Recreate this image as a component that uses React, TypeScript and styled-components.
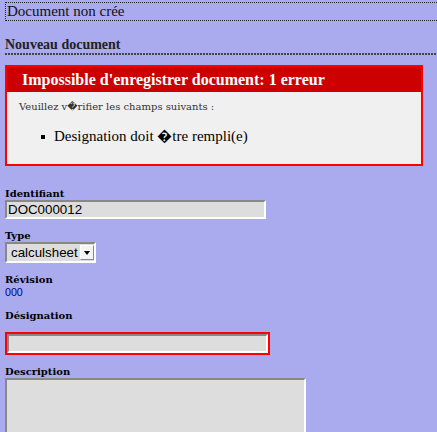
import React from 'react';
import styled, { createGlobalStyle } from 'styled-components';

const GlobalStyle = createGlobalStyle`
  html, body {
    margin: 0;
    padding: 0;
    background: #aaaaee;
    overflow: hidden;
  }
  body {
    font-family: 'Liberation Serif', 'Times New Roman', serif;
    color: #000;
  }
`;

const Page = styled.div`
  padding: 2px 0 0 5px;
  min-height: 432px;
  box-sizing: border-box;
`;

const Title = styled.h1`
  margin: 0 -10px 0 0;
  border: 1px dotted #222;
  padding: 0 1px;
  font: normal 15px/17px 'Liberation Serif', 'Times New Roman', serif;
  color: #111;
`;

const SectionHeading = styled.h2`
  margin: 15px 0 0;
  padding: 0 0 2px;
  font: bold 14px/17px 'Liberation Serif', 'Times New Roman', serif;
  color: #222;
  background: linear-gradient(to right, #444 2px, transparent 2px) left bottom / 3px 2px repeat-x;
`;

const ErrorBox = styled.div`
  width: 418px;
  box-sizing: border-box;
  margin-top: 10px;
  border: 2px solid #ff0000;
  background: #f0f0f0;
`;

const ErrorHeader = styled.h2`
  margin: 0;
  padding: 0 0 0 15px;
  height: 25px;
  font: bold 16px/25px 'Liberation Serif', 'Times New Roman', serif;
  color: #fff;
  background: #cc0000;
`;

const ErrorBody = styled.div`
  padding: 0 7px 19px;
`;

const ErrorIntro = styled.p`
  margin: 0;
  padding: 9px 5px 0;
  font: normal 10px/12px 'DejaVu Serif', serif;
  color: #333;
`;

const ErrorList = styled.ul`
  margin: 14px 0 0;
  padding: 0 0 0 27px;
  list-style: none;
`;

const ErrorItem = styled.li`
  display: flex;
  align-items: center;
  font: normal 15px/18px 'Liberation Serif', 'Times New Roman', serif;
  color: #000;
  &::before {
    content: '';
    flex: none;
    width: 4px;
    height: 4px;
    margin: 1px 9px 0 0;
    background: #000;
  }
`;

const Form = styled.div`
  display: flex;
  flex-direction: column;
  align-items: flex-start;
  padding-top: 11px;
`;

const Field = styled.div`
  display: flex;
  flex-direction: column;
  align-items: flex-start;
  margin-top: 10px;
`;

const Label = styled.label`
  font: bold 10px/13px 'DejaVu Serif', serif;
  color: #000;
`;

const Value = styled.div`
  font: normal 10.667px/13px 'Liberation Sans', Arial, sans-serif;
  color: #000080;
`;

const insetBorder = `
  border: 2px solid;
  border-color: #888888 #ffffff #ffffff #888888;
`;

const TextInput = styled.input`
  ${insetBorder}
  width: 261px;
  height: 19px;
  box-sizing: border-box;
  margin: 0;
  padding: 0 1px;
  background: #dddddd;
  font: normal 13.333px/15px 'Liberation Sans', Arial, sans-serif;
  color: #000;
  outline: none;
`;

const ErrorWrap = styled.div`
  display: flex;
  margin-top: 10px;
  padding: 2px;
  background: #ff0000;
`;

const SelectBox = styled.div`
  ${insetBorder}
  display: flex;
  align-items: center;
  width: 91px;
  height: 21px;
  box-sizing: border-box;
  padding-left: 4px;
  background: #dddddd;
  font: normal 13.333px/15px 'Liberation Sans', Arial, sans-serif;
  color: #000;
`;

const SelectText = styled.span`
  flex: 1;
  white-space: nowrap;
`;

const SelectArrow = styled.span`
  display: flex;
  align-items: center;
  justify-content: center;
  width: 14px;
  height: 15px;
  box-sizing: border-box;
  border: 1px solid;
  border-color: #ffffff #888888 #888888 #ffffff;
  background: #f4f4f4;
`;

const TextArea = styled.textarea`
  ${insetBorder}
  display: block;
  width: 301px;
  height: 80px;
  box-sizing: border-box;
  margin: 0;
  padding: 1px;
  background: #dddddd;
  font: normal 13.333px/15px 'Liberation Sans', Arial, sans-serif;
  resize: none;
  outline: none;
`;

export default function App() {
  return (
    <>
      <GlobalStyle />
      <Page>
        <Title>Document non crée</Title>
        <SectionHeading>Nouveau document</SectionHeading>
        <ErrorBox>
          <ErrorHeader>Impossible d'enregistrer document: 1 erreur</ErrorHeader>
          <ErrorBody>
            <ErrorIntro>Veuillez v{'\uFFFD'}rifier les champs suivants :</ErrorIntro>
            <ErrorList>
              <ErrorItem>Designation doit {'\uFFFD'}tre rempli(e)</ErrorItem>
            </ErrorList>
          </ErrorBody>
        </ErrorBox>
        <Form>
          <Field>
            <Label>Identifiant</Label>
            <TextInput type="text" defaultValue="DOC000012" />
          </Field>
          <Field>
            <Label>Type</Label>
            <SelectBox>
              <SelectText>calculsheet</SelectText>
              <SelectArrow>
                <svg width="6" height="4" viewBox="0 0 6 4">
                  <path d="M0 0H6L3 4Z" fill="#000" />
                </svg>
              </SelectArrow>
            </SelectBox>
          </Field>
          <Field>
            <Label>Révision</Label>
            <Value>000</Value>
          </Field>
          <Field>
            <Label>Désignation</Label>
            <ErrorWrap>
              <TextInput type="text" defaultValue="" />
            </ErrorWrap>
          </Field>
          <Field>
            <Label>Description</Label>
            <TextArea defaultValue="" />
          </Field>
        </Form>
      </Page>
    </>
  );
}
